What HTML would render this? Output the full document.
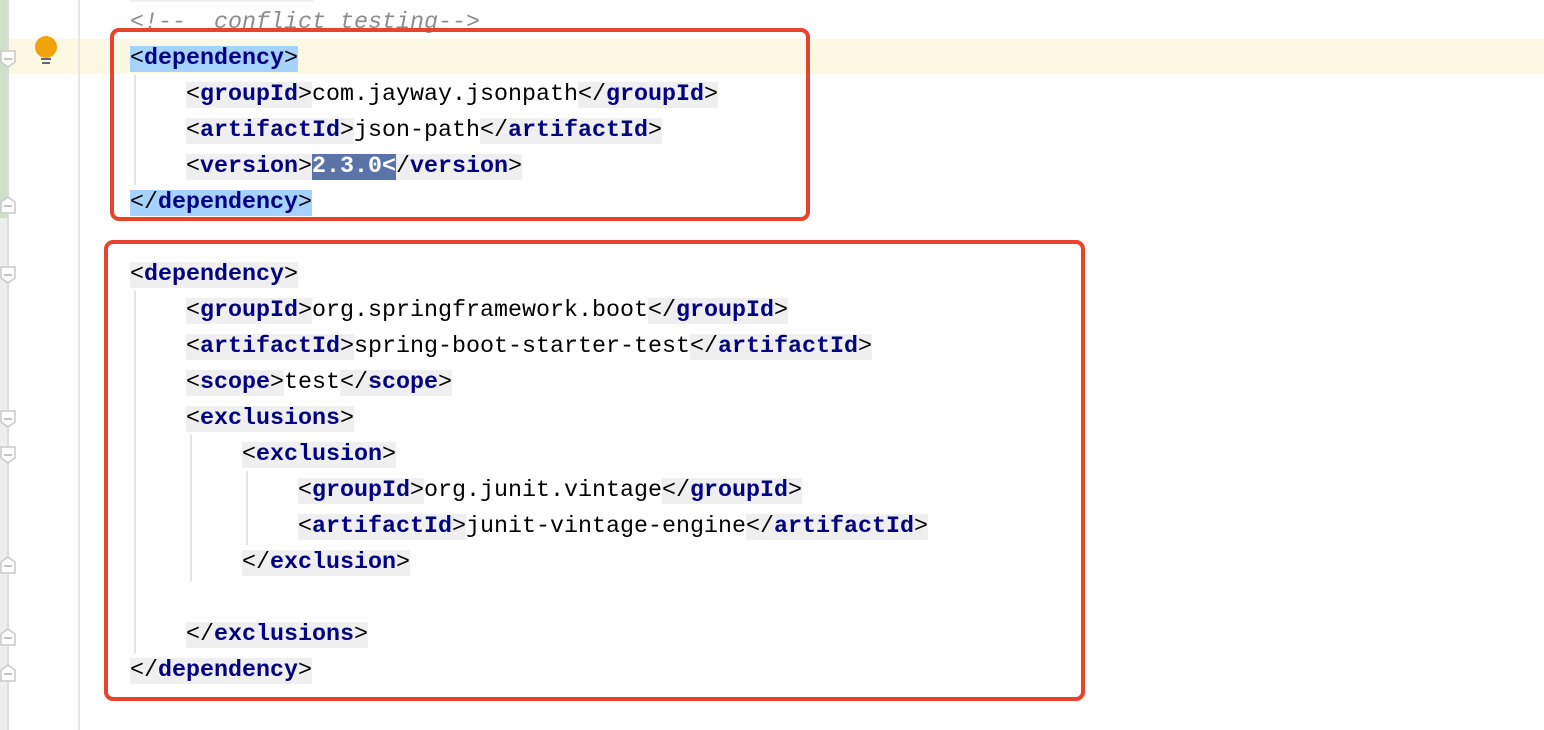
<!DOCTYPE html>
<html><head><meta charset="utf-8"><style>
body{margin:0;width:1544px;height:730px;background:#fff;position:relative;overflow:hidden;font-family:"Liberation Mono",monospace;}
.row{position:absolute;left:0;height:36px;line-height:36px;font-size:23.33px;white-space:pre;color:#000;margin-top:2px;}
.t{background:#efefef;}
b{color:#000080;font-weight:bold;}
.sel{background:#a6d2ff;}
.ver{background:#5a74a8;color:#fff;font-weight:bold;}
.guide{position:absolute;width:2px;background:#e4e4e4;}
.box{position:absolute;border:4px solid #e8432c;border-radius:9px;box-sizing:border-box;}
</style></head><body>
<div style="position:absolute;left:8px;top:39px;width:1536px;height:35px;background:#fdf8e3"></div>
<div style="position:absolute;left:0;top:0;width:8px;height:730px;background:#eeeeee"></div>
<div style="position:absolute;left:0;top:0;width:8px;height:218px;background:#cfe0c8"></div>
<div style="position:absolute;left:7px;top:0;width:2px;height:730px;background:#dcdcdc"></div>
<div style="position:absolute;left:78px;top:0;width:2px;height:730px;background:#e6e6e6"></div>
<div style="position:absolute;left:130px;top:0;width:183px;height:2px;background:#efefef"></div>

<svg style="position:absolute;left:33px;top:35px" width="26" height="32" viewBox="0 0 26 32"><circle cx="13" cy="12" r="11" fill="#f0a30a"/><rect x="8" y="17" width="10" height="5" fill="#f0a30a"/><rect x="8" y="23" width="10" height="2" fill="#666"/><rect x="9" y="27" width="8" height="2" fill="#666"/></svg>

<svg style="position:absolute;left:0;top:0" width="20" height="730">
<g fill="#fff" stroke="#c8c8c8" stroke-width="1.5">
<path d="M1 51h14v11l-7 5l-7-5z"/><path d="M1 213h14v-11l-7-5l-7 5z"/>
<path d="M1 267h14v11l-7 5l-7-5z"/><path d="M1 411h14v11l-7 5l-7-5z"/><path d="M1 447h14v11l-7 5l-7-5z"/>
<path d="M1 573h14v-11l-7-5l-7 5z"/><path d="M1 645h14v-11l-7-5l-7 5z"/><path d="M1 681h14v-11l-7-5l-7 5z"/>
</g>
<g stroke="#b0b0b0" stroke-width="1.5"><path d="M4 59h8M4 206h8M4 275h8M4 419h8M4 455h8M4 566h8M4 638h8M4 674h8"/></g>
</svg>

<div class="guide" style="left:134px;top:75px;height:110px"></div>
<div class="guide" style="left:134px;top:291px;height:362px"></div>
<div class="guide" style="left:190px;top:435px;height:146px"></div>
<div class="guide" style="left:246px;top:471px;height:74px"></div>

<div class="row" style="top:3px;left:130px;color:#8c8c8c;font-style:italic">&lt;!--  conflict testing--&gt;</div>
<div class="row" style="top:39px;left:130px"><span class="sel">&lt;<b>dependency</b>&gt;</span></div>
<div class="row" style="top:75px;left:186px"><span class="t">&lt;<b>groupId</b>&gt;</span>com.jayway.jsonpath<span class="t">&lt;/<b>groupId</b>&gt;</span></div>
<div class="row" style="top:111px;left:186px"><span class="t">&lt;<b>artifactId</b>&gt;</span>json-path<span class="t">&lt;/<b>artifactId</b>&gt;</span></div>
<div class="row" style="top:147px;left:186px"><span class="t">&lt;<b>version</b>&gt;</span><span class="ver">2.3.0&lt;</span><span class="t">/<b>version</b>&gt;</span></div>
<div class="row" style="top:183px;left:130px"><span class="sel">&lt;/<b>dependency</b>&gt;</span></div>

<div class="row" style="top:255px;left:130px"><span class="t">&lt;<b>dependency</b>&gt;</span></div>
<div class="row" style="top:291px;left:186px"><span class="t">&lt;<b>groupId</b>&gt;</span>org.springframework.boot<span class="t">&lt;/<b>groupId</b>&gt;</span></div>
<div class="row" style="top:327px;left:186px"><span class="t">&lt;<b>artifactId</b>&gt;</span>spring-boot-starter-test<span class="t">&lt;/<b>artifactId</b>&gt;</span></div>
<div class="row" style="top:363px;left:186px"><span class="t">&lt;<b>scope</b>&gt;</span>test<span class="t">&lt;/<b>scope</b>&gt;</span></div>
<div class="row" style="top:399px;left:186px"><span class="t">&lt;<b>exclusions</b>&gt;</span></div>
<div class="row" style="top:435px;left:242px"><span class="t">&lt;<b>exclusion</b>&gt;</span></div>
<div class="row" style="top:471px;left:298px"><span class="t">&lt;<b>groupId</b>&gt;</span>org.junit.vintage<span class="t">&lt;/<b>groupId</b>&gt;</span></div>
<div class="row" style="top:507px;left:298px"><span class="t">&lt;<b>artifactId</b>&gt;</span>junit-vintage-engine<span class="t">&lt;/<b>artifactId</b>&gt;</span></div>
<div class="row" style="top:543px;left:242px"><span class="t">&lt;/<b>exclusion</b>&gt;</span></div>
<div class="row" style="top:615px;left:186px"><span class="t">&lt;/<b>exclusions</b>&gt;</span></div>
<div class="row" style="top:651px;left:130px"><span class="t">&lt;/<b>dependency</b>&gt;</span></div>

<div class="box" style="left:110px;top:28px;width:700px;height:193px"></div>
<div class="box" style="left:104px;top:240px;width:981px;height:461px"></div>
</body></html>
